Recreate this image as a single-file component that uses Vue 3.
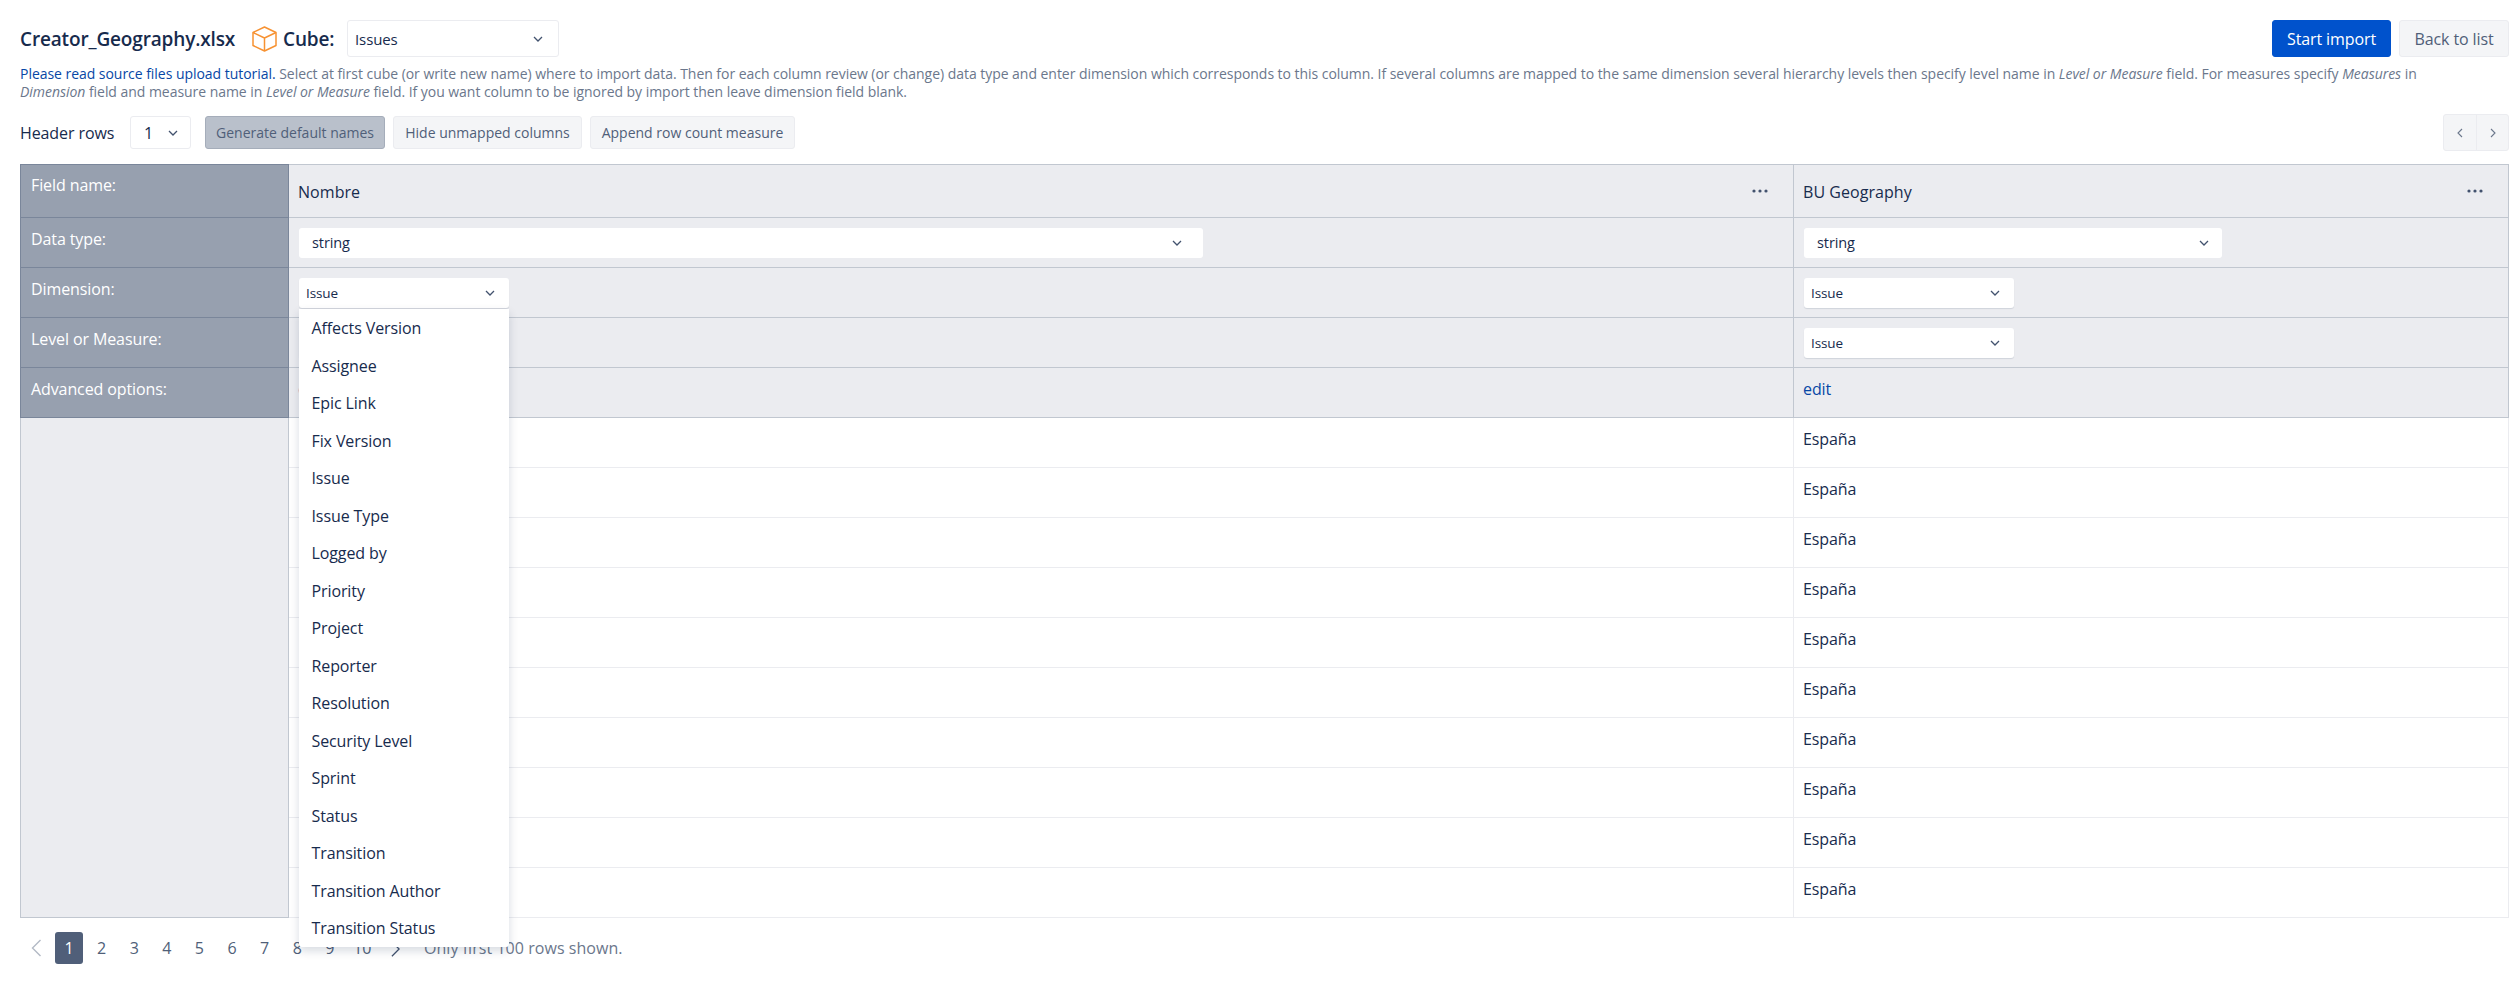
<script setup>
const dims = ['Affects Version','Assignee','Epic Link','Fix Version','Issue','Issue Type','Logged by','Priority','Project','Reporter','Resolution','Security Level','Sprint','Status','Transition','Transition Author','Transition Status']
const rows = Array.from({ length: 10 }, (_, i) => i)
const pages = [2,3,4,5,6,7,8,9,10]
</script>

<template>
  <div class="page">
    <header class="top">
      <h1 class="file">Creator_Geography.xlsx</h1>
      <svg class="cube" viewBox="0 0 25 26" fill="none" stroke="#f79232" stroke-width="1.5" stroke-linejoin="round"><path d="M12.5 1 24 6.5v13L12.5 25 1 19.5v-13z"/><path d="M1 6.5 12.5 12 24 6.5M12.5 12v13"/></svg>
      <span class="cube-label">Cube:</span>
      <div class="sel cube-sel"><span>Issues</span><svg class="chev" viewBox="0 0 10 6"><path d="M1 1l4 4 4-4"/></svg></div>
      <div class="top-actions">
        <button class="btn primary">Start import</button>
        <button class="btn big">Back to list</button>
      </div>
    </header>
    <p class="help"><a>Please read source files upload tutorial.</a> Select at first cube (or write new name) where to import data. Then for each column review (or change) data type and enter dimension which corresponds to this column. If several columns are mapped to the same dimension several hierarchy levels then specify level name in <i>Level or Measure</i> field. For measures specify <i>Measures</i> in <i>Dimension</i> field and measure name in <i>Level or Measure</i> field. If you want column to be ignored by import then leave dimension field blank.</p>
    <div class="tools">
      <span class="hr-label">Header rows</span>
      <div class="sel hr-sel"><span>1</span><svg class="chev" viewBox="0 0 10 6"><path d="M1 1l4 4 4-4"/></svg></div>
      <button class="btn sm selected">Generate default names</button>
      <button class="btn sm">Hide unmapped columns</button>
      <button class="btn sm">Append row count measure</button>
      <div class="nav">
        <button><svg viewBox="0 0 6 10"><path d="M5 1 1 5l4 4"/></svg></button>
        <button><svg viewBox="0 0 6 10"><path d="M1 1l4 4-4 4"/></svg></button>
      </div>
    </div>
    <table class="grid">
      <colgroup><col class="c0"><col class="c1"><col></colgroup>
      <tbody>
        <tr class="r-head">
          <th>Field name:</th>
          <td class="name">Nombre<svg class="dots" viewBox="0 0 16 4"><circle cx="2" cy="2" r="1.6"/><circle cx="8" cy="2" r="1.6"/><circle cx="14" cy="2" r="1.6"/></svg></td>
          <td class="name">BU Geography<svg class="dots" viewBox="0 0 16 4"><circle cx="2" cy="2" r="1.6"/><circle cx="8" cy="2" r="1.6"/><circle cx="14" cy="2" r="1.6"/></svg></td>
        </tr>
        <tr class="r-ctl">
          <th>Data type:</th>
          <td><div class="cell-sel wide"><span>string</span><svg class="chev" viewBox="0 0 10 6"><path d="M1 1l4 4 4-4"/></svg></div></td>
          <td><div class="cell-sel wide2"><span>string</span><svg class="chev" viewBox="0 0 10 6"><path d="M1 1l4 4 4-4"/></svg></div></td>
        </tr>
        <tr class="r-ctl">
          <th>Dimension:</th>
          <td class="dd-host">
            <div class="cell-sel narrow"><span>Issue</span><svg class="chev" viewBox="0 0 10 6"><path d="M1 1l4 4 4-4"/></svg></div>
            <ul class="menu"><li v-for="d in dims" :key="d">{{ d }}</li></ul>
          </td>
          <td><div class="cell-sel narrow"><span>Issue</span><svg class="chev" viewBox="0 0 10 6"><path d="M1 1l4 4 4-4"/></svg></div></td>
        </tr>
        <tr class="r-ctl">
          <th>Level or Measure:</th>
          <td><div class="cell-sel narrow"><span>Issue</span><svg class="chev" viewBox="0 0 10 6"><path d="M1 1l4 4 4-4"/></svg></div></td>
          <td><div class="cell-sel narrow"><span>Issue</span><svg class="chev" viewBox="0 0 10 6"><path d="M1 1l4 4 4-4"/></svg></div></td>
        </tr>
        <tr class="r-ctl">
          <th>Advanced options:</th>
          <td class="txt"><a class="edit">edit</a></td>
          <td class="txt"><a class="edit">edit</a></td>
        </tr>
        <tr v-for="r in rows" :key="r" class="r-data">
          <th v-if="r === 0" class="blank" rowspan="10"></th>
          <td class="txt"></td>
          <td class="txt">España</td>
        </tr>
      </tbody>
    </table>
    <nav class="pager">
      <svg class="pg-prev" viewBox="0 0 10 18"><path d="M9 1 1 9l8 8"/></svg>
      <span class="pg on">1</span>
      <span v-for="p in pages" :key="p" class="pg">{{ p }}</span>
      <svg class="pg-next" viewBox="0 0 10 18"><path d="M1 1l8 8-8 8"/></svg>
      <span class="note">Only first 100 rows shown.</span>
    </nav>
  </div>
</template>

<style>
html, body { margin: 0; background: #fff; }
</style>

<style scoped>
.page { width: 2517px; height: 992px; box-sizing: border-box; padding: 20px 8px 0 20px; font-family: "Open Sans", "Noto Sans", sans-serif; font-size: 16px; letter-spacing: -0.1px; color: #172b4d; overflow: hidden; }
.top { display: flex; align-items: center; height: 37px; }
.file { margin: 0; width: 215px; white-space: nowrap; font-size: 19px; font-weight: 600; letter-spacing: -0.15px; }
.cube { width: 25px; height: 26px; margin-left: 17px; flex: none; }
.cube-label { margin-left: 6px; width: 50px; font-size: 19px; font-weight: 600; letter-spacing: -0.15px; }
.sel { display: flex; align-items: center; justify-content: space-between; box-sizing: border-box; background: #fff; border: 1px solid #ebecf0; border-radius: 3px; }
.chev { width: 10px; height: 6px; fill: none; stroke: #42526e; stroke-width: 1.3; flex: none; }
.cube-sel { width: 212px; height: 37px; margin-left: 14px; padding: 0 15px 0 7px; font-size: 15px; }
.top-actions { margin-left: auto; display: flex; gap: 8px; }
.btn { border: 1px solid #ebecf0; background: #f4f5f7; border-radius: 3px; color: #505f79; font: inherit; letter-spacing: inherit; padding: 0; }
.big { width: 110px; height: 37px; }
.primary { width: 119px; height: 37px; background: #0052cc; border-color: #0052cc; color: #fff; }
.help { margin: 8px 0 0; width: 2445px; font-size: 14px; line-height: 18px; color: #6b778c; letter-spacing: -0.04px; }
.help a { color: #0747a6; }
.tools { display: flex; align-items: center; margin-top: 13px; height: 37px; }
.hr-label { width: 110px; }
.hr-sel { width: 61px; height: 33px; padding: 0 12px 0 13px; }
.btn.sm { height: 33px; margin-left: 8px; font-size: 14px; letter-spacing: 0; color: #505f79; }
.btn.sm:nth-of-type(1) { width: 180px; margin-left: 14px; background: #b9c0cb; border-color: #a5adba; }
.btn.sm:nth-of-type(2) { width: 189px; }
.btn.sm:nth-of-type(3) { width: 205px; }
.nav { margin-left: auto; display: flex; border: 1px solid #ebecf0; border-radius: 3px; background: #f4f5f7; height: 37px; box-sizing: border-box; }
.nav button { width: 32px; border: 0; background: none; padding: 0; display: flex; align-items: center; justify-content: center; }
.nav button + button { border-left: 1px solid #ebecf0; }
.nav svg { width: 6px; height: 10px; fill: none; stroke: #6b778c; stroke-width: 1.1; }
.grid { margin-top: 13px; width: 2489px; table-layout: fixed; border-collapse: collapse; }
.c0 { width: 268px; }
.c1 { width: 1505px; }
.grid th { background: #97a0af; color: #fff; font-weight: 400; text-align: left; vertical-align: top; padding: 10px 10px 0; line-height: 22px; border: 1px solid #7a869a; box-sizing: border-box; }
.grid th.blank { background: #ebecf0; border-color: #c1c7d0; }
.grid td { border: 1px solid #c1c7d0; background: #ebecf0; padding: 0 10px; box-sizing: border-box; vertical-align: middle; }
.grid td.txt { vertical-align: top; padding: 10px 9px 0; line-height: 22px; }
.r-head { height: 53px; }
.r-head th { padding-top: 9px; }
.r-ctl { height: 50px; }
.r-data { height: 50px; }
.r-data td { background: #fff; border-color: #ebecf0; }
.grid td.name { position: relative; padding: 2px 9px 0; letter-spacing: 0.05px; }
.dots { position: absolute; right: 25px; top: 24px; width: 16px; height: 4px; fill: #42526e; }
.cell-sel { display: flex; align-items: center; justify-content: space-between; box-sizing: border-box; height: 30px; background: #fff; border-radius: 3px; }
.wide { width: 904px; padding: 0 21px 0 13px; font-size: 14.5px; }
.wide2 { width: 418px; padding: 0 13px 0 13px; font-size: 14.5px; }
.narrow { width: 210px; padding: 0 14px 0 7px; font-size: 13.5px; box-shadow: 0 1px 1px rgba(9,30,66,.12); }
.edit { color: #0747a6; }
.dd-host { position: relative; }
.menu { position: absolute; z-index: 5; left: 10px; top: 41px; width: 210px; margin: 0; padding: 0; list-style: none; background: #fff; box-shadow: 0 4px 10px rgba(9,30,66,.16); border-radius: 0 0 3px 3px; }
.menu li { box-sizing: border-box; height: 37.5px; line-height: 37.5px; padding: 1px 0 0 12.5px; }
.pager { display: flex; align-items: center; margin-top: 14px; height: 32px; padding-left: 11px; color: #505f79; }
.pg-prev { width: 11px; height: 18px; margin-right: 13px; fill: none; stroke: #b3bac5; stroke-width: 1.4; flex: none; }
.pg-next { width: 9px; height: 18px; margin-left: 10px; fill: none; stroke: #42526e; stroke-width: 1.4; flex: none; position: relative; top: 1px; }
.pg { width: 28px; height: 32px; margin-right: 4.6px; display: flex; align-items: center; justify-content: center; border-radius: 3px; }
.pg.on { background: #505f79; color: #fff; }
.note { margin-left: 24px; color: #6b778c; letter-spacing: 0.05px; }
</style>
